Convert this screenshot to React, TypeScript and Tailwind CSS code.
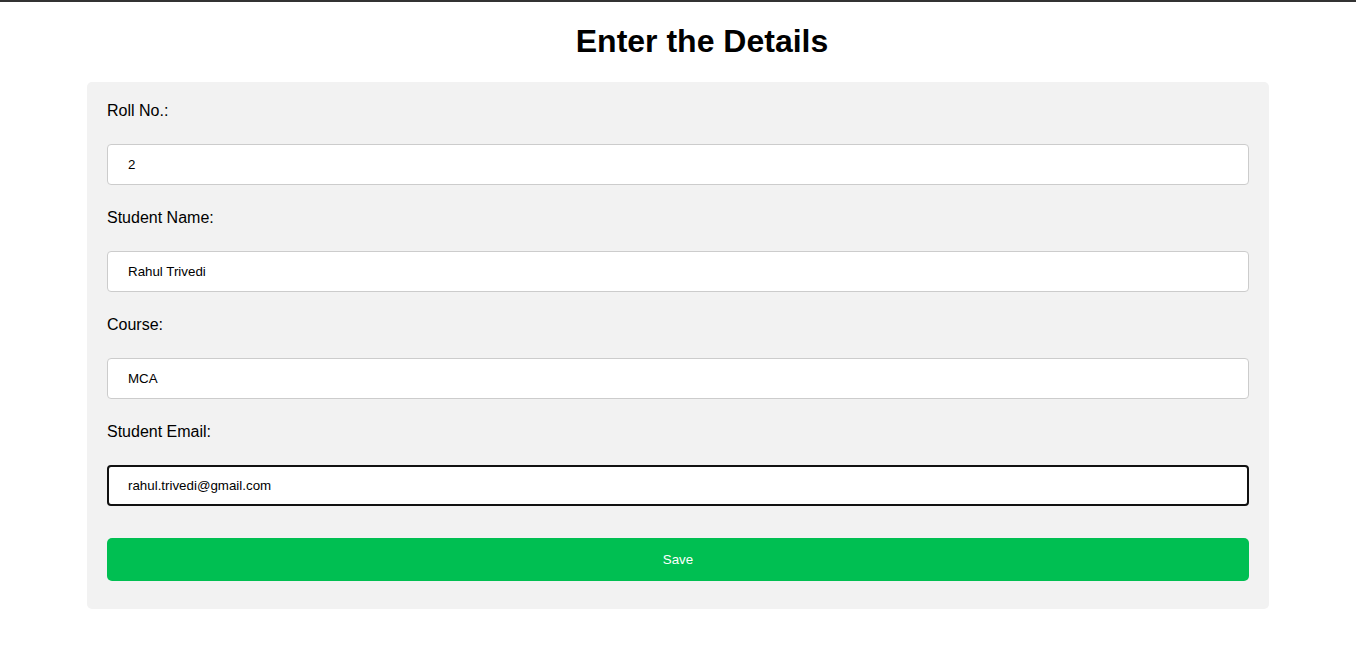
import React from 'react';

const fields = [
  { label: 'Roll No.:', value: '2' },
  { label: 'Student Name:', value: 'Rahul Trivedi' },
  { label: 'Course:', value: 'MCA' },
  { label: 'Student Email:', value: 'rahul.trivedi@gmail.com', focused: true },
];

export default function App() {
  return (
    <div className="min-h-[647px] bg-white border-t-2 border-[#333] font-['Liberation_Sans',Arial,sans-serif] text-black">
      <h1 className="text-center text-[32px] font-bold leading-[37px] pt-[21px] pb-[22px] pl-12">Enter the Details</h1>
      <div className="mx-auto w-[1182px] bg-[#f2f2f2] rounded-[5px] px-5 pt-5 pb-7">
        {fields.map((f) => (
          <div key={f.label} className="mb-6">
            <label className="block text-[16px] leading-[18px] mb-6">{f.label}</label>
            <input
              defaultValue={f.value}
              className={
                f.focused
                  ? 'block w-full h-[41px] bg-white rounded-[4px] border-2 border-[#111] px-[19px] text-[13.33px] outline-none'
                  : 'block w-full h-[41px] bg-white rounded-[4px] border border-[#ccc] px-5 text-[13.33px] outline-none'
              }
            />
          </div>
        ))}
        <button className="mt-8 block w-full h-[43px] rounded-[5px] bg-[#00bf52] text-white text-[13.33px]">Save</button>
      </div>
    </div>
  );
}
